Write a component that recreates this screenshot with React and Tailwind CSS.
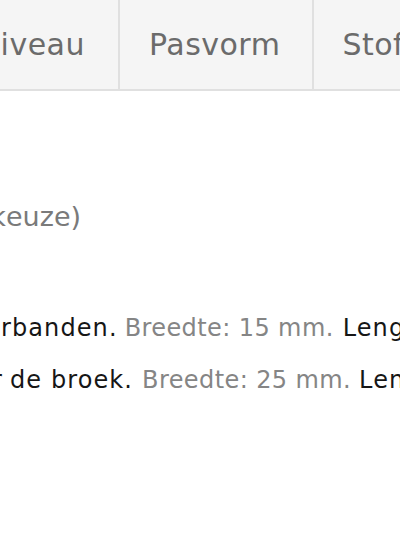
import React from 'react';

function Tab({ label, className }) {
    return (
        <div className={`flex shrink-0 items-center border-r-2 border-[#e0e0e0] ${className}`}>
            <span className="text-[30px] tracking-[0.5px] text-[#6b6b6b]">{label}</span>
        </div>
    );
}

// text that runs off the left edge: prefix box ends at a fixed x and overflows leftwards
function Line({ edge, hidden, hiddenClass, children, className }) {
    return (
        <div className={`flex whitespace-nowrap ${className}`}>
            <div className="flex shrink-0 justify-end" style={{ width: edge }}>
                <span className={`shrink-0 ${hiddenClass || ''}`}>{hidden}</span>
            </div>
            {children}
        </div>
    );
}

export default function App() {
    return (
        <div className="h-[545px] w-[400px] overflow-hidden bg-white font-['DejaVu_Sans',sans-serif]">
            <div className="flex h-[91px] border-b-2 border-[#e0e0e0] bg-[#f5f5f5]">
                <div className="flex w-[120px] shrink-0 justify-end">
                    <Tab label="Niveau" className="pr-[33px]" />
                </div>
                <Tab label="Pasvorm" className="pl-[29px] pr-[32px]" />
                <Tab label="Stof" className="pl-[28px] pr-[30px]" />
            </div>

            <div className="pt-[111px]">
                <Line edge={6} hidden="(naar k" className="text-[27px] leading-[30px] text-[#7a7a7a]">
                    <span>euze)</span>
                </Line>

                <div className="mt-[82px] space-y-[24px] text-[24px] leading-[28px]">
                    <Line edge={1} hidden="Twee schoude" hiddenClass="tracking-[1.1px]" className="text-[#161616]">
                        <span className="tracking-[1.1px]">rbanden.</span>
                        <span className="ml-[7px] tracking-[0.4px] text-[#858585]">Breedte: 15 mm.</span>
                        <span className="ml-[9px] tracking-[1.1px]">Lengte: 110 cm.</span>
                    </Line>
                    <Line edge={3} hidden="Riem voor" hiddenClass="tracking-[1.1px]" className="text-[#161616]">
                        <span className="ml-[7px] tracking-[1.1px]">de broek.</span>
                        <span className="ml-[9px] tracking-[0.4px] text-[#858585]">Breedte: 25 mm.</span>
                        <span className="ml-[8px] tracking-[1.1px]">Lengte: 120 cm.</span>
                    </Line>
                </div>
            </div>
        </div>
    );
}
